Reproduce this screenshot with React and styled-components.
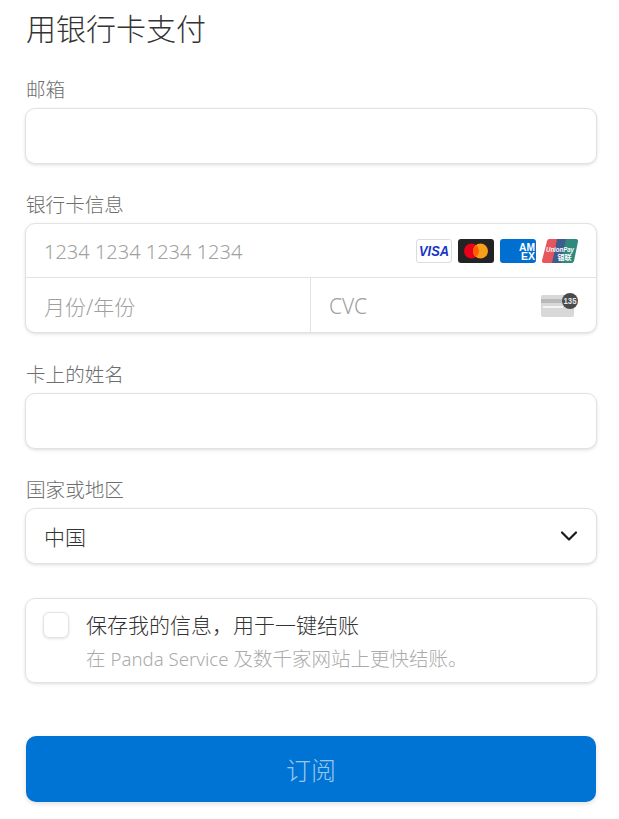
import React from 'react';
import styled, { createGlobalStyle } from 'styled-components';

const GlobalStyle = createGlobalStyle`
  html, body {
    margin: 0;
    padding: 0;
    background: #fff;
  }
  body {
    font-family: "Noto Sans", "Noto Sans CJK SC", sans-serif;
    font-weight: 300;
  }
`;

const fieldBorder = '1px solid #e2e2e2';
const fieldShadow = '0 1px 3px rgba(0, 0, 0, 0.1), 0 2px 4px rgba(0, 0, 0, 0.03)';

const Page = styled.form`
  width: 619px;
  height: 819px;
  box-sizing: border-box;
  padding: 8px 22px 0 25px;
  overflow: hidden;
`;

const Title = styled.h2`
  margin: 0 0 26px 1px;
  font-size: 30px;
  line-height: 42px;
  font-weight: 300;
  color: #333;
`;

const Field = styled.div`
  display: flex;
  flex-direction: column;
  margin-bottom: ${(p) => p.$gap || 27}px;
`;

const Label = styled.label`
  height: 28px;
  margin: 0 0 4px 1px;
  font-size: 19.6px;
  line-height: 28px;
  color: #6e6e6e;
`;

const Input = styled.input`
  height: 56px;
  box-sizing: border-box;
  border: ${fieldBorder};
  border-radius: 10px;
  padding: 0 18px;
  background: #fff;
  box-shadow: ${fieldShadow};
  font: inherit;
  font-size: 20px;
  outline: none;
`;

const CardBox = styled.div`
  height: 110px;
  box-sizing: border-box;
  display: grid;
  grid-template-rows: 53px 1px 54px;
  border: ${fieldBorder};
  border-radius: 10px;
  background: #fff;
  box-shadow: ${fieldShadow};
`;

const CardRow = styled.div`
  display: flex;
  align-items: center;
  justify-content: space-between;
  padding: 0 18px;
`;

const Divider = styled.div`
  background: #e2e2e2;
`;

const SplitRow = styled.div`
  display: grid;
  grid-template-columns: 284px 1fr;
`;

const SplitCell = styled.div`
  display: flex;
  align-items: center;
  justify-content: space-between;
  padding: 0 17px 0 18px;
  border-left: ${(p) => (p.$right ? fieldBorder : '0')};
`;

const Placeholder = styled.span`
  padding-top: 2px;
  font-size: ${(p) => p.$size || 20}px;
  color: #a0a0a0;
`;

const Brands = styled.div`
  display: flex;
  gap: 6px;
`;

const Select = styled.div`
  height: 56px;
  box-sizing: border-box;
  display: flex;
  align-items: center;
  justify-content: space-between;
  padding: 0 18px;
  border: ${fieldBorder};
  border-radius: 10px;
  background: #fff;
  box-shadow: ${fieldShadow};
  font-size: 21px;
  color: #333;
`;

const SaveBox = styled.div`
  height: 85px;
  box-sizing: border-box;
  display: flex;
  gap: 17px;
  padding: 13px 17px 0;
  border: ${fieldBorder};
  border-radius: 10px;
  box-shadow: ${fieldShadow};
`;

const Check = styled.span`
  flex: none;
  width: 26px;
  height: 26px;
  box-sizing: border-box;
  border: ${fieldBorder};
  border-radius: 6px;
  background: #fff;
  box-shadow: 0 1px 3px rgba(0, 0, 0, 0.1);
`;

const SaveText = styled.div`
  display: flex;
  flex-direction: column;
  margin-top: -2px;
`;

const SaveTitle = styled.span`
  font-size: 21px;
  line-height: 30px;
  color: #333;
`;

const SaveHint = styled.span`
  font-size: 19.5px;
  line-height: 38px;
  height: 38px;
  color: #aaa;
  white-space: nowrap;
`;

const BrandName = styled.span`
  font-size: 18.6px;
`;

const Submit = styled.button`
  display: block;
  width: 570px;
  height: 66px;
  margin: 53px 0 0 1px;
  padding: 0;
  border: 0;
  border-radius: 10px;
  background: #0074d4;
  box-shadow: 0 2px 5px rgba(0, 0, 0, 0.12);
  color: rgba(255, 255, 255, 0.6);
  font: inherit;
  font-size: 25px;
`;

const VisaIcon = () => (
  <svg width="36" height="24" viewBox="0 0 36 24">
    <rect x="0.5" y="0.5" width="35" height="23" rx="2.5" fill="#fff" stroke="#dcdce0" />
    <text x="18" y="17" textAnchor="middle" textLength="30" lengthAdjust="spacingAndGlyphs" fontFamily="Liberation Sans" fontSize="14.5" fontWeight="700" fontStyle="italic" fill="#1a35c4">VISA</text>
  </svg>
);

const MastercardIcon = () => (
  <svg width="36" height="24" viewBox="0 0 36 24">
    <rect width="36" height="24" rx="3" fill="#232323" />
    <circle cx="13.500" cy="12" r="7.500" fill="#eb001b" />
    <circle cx="22.500" cy="12" r="7.500" fill="#f79e1b" />
    <path d="M18 6a7.500 7.500 0 0 1 0 12a7.500 7.500 0 0 1 0-12z" fill="#ff5f00" />
  </svg>
);

const AmexIcon = () => (
  <svg width="36" height="24" viewBox="0 0 36 24">
    <rect width="36" height="24" rx="3" fill="#016fd0" />
    <text x="19" y="11.500" textLength="16" lengthAdjust="spacingAndGlyphs" fontFamily="Liberation Sans" fontSize="10.500" fontWeight="700" fill="#fff">AM</text>
    <text x="21" y="21" textLength="14" lengthAdjust="spacingAndGlyphs" fontFamily="Liberation Sans" fontSize="10.500" fontWeight="700" fill="#fff">EX</text>
  </svg>
);

const UnionPayIcon = () => (
  <svg width="36" height="24" viewBox="0 0 36 24">
    <path d="M7 0h11l-5 24H2a2 2 0 0 1-2-2.500L5 2a2.500 2.500 0 0 1 2-2z" fill="#e5565e" />
    <path d="M15 0h12l-5 24H10z" fill="#3e5c8e" />
    <path d="M24 0h10a2 2 0 0 1 2 2.500L32 22a2.500 2.500 0 0 1-2 2H19z" fill="#2f8a7d" />
    <text x="4" y="13" textLength="28" lengthAdjust="spacingAndGlyphs" fontFamily="Liberation Sans" fontSize="7" fontWeight="700" fontStyle="italic" fill="#fff">UnionPay</text>
    <text x="22.500" y="20.500" textAnchor="middle" fontFamily="Noto Sans CJK SC" fontSize="7" fontWeight="700" fill="#fff">银联</text>
  </svg>
);

const CvcIcon = () => (
  <svg width="38" height="26" viewBox="0 0 38 26">
    <rect x="0" y="3" width="33" height="22" rx="2" fill="#d8d8d8" />
    <rect x="0" y="7" width="33" height="4" fill="#b9b9b9" />
    <rect x="2" y="14" width="20" height="2" fill="#f4f4f4" />
    <circle cx="29" cy="9" r="8" fill="#4a4a4a" />
    <text x="29" y="12" textAnchor="middle" textLength="13" lengthAdjust="spacingAndGlyphs" fontFamily="Liberation Sans" fontSize="8.500" fontWeight="700" fill="#e6e6e6">135</text>
  </svg>
);

const Chevron = () => (
  <svg width="18" height="12" viewBox="0 0 18 12">
    <path d="M2 2.500l7 7 7-7" fill="none" stroke="#1a1a1a" strokeWidth="2.200" strokeLinecap="round" strokeLinejoin="round" />
  </svg>
);

const App = () => {
  return (
    <>
      <GlobalStyle />
      <Page>
        <Title>用银行卡支付</Title>
        <Field>
          <Label>邮箱</Label>
          <Input type="text" />
        </Field>
        <Field $gap={28}>
          <Label>银行卡信息</Label>
          <CardBox>
            <CardRow>
              <Placeholder>1234 1234 1234 1234</Placeholder>
              <Brands>
                <VisaIcon />
                <MastercardIcon />
                <AmexIcon />
                <UnionPayIcon />
              </Brands>
            </CardRow>
            <Divider />
            <SplitRow>
              <SplitCell>
                <Placeholder $size={21}>月份/年份</Placeholder>
              </SplitCell>
              <SplitCell $right>
                <Placeholder $size={21}>CVC</Placeholder>
                <CvcIcon />
              </SplitCell>
            </SplitRow>
          </CardBox>
        </Field>
        <Field>
          <Label>卡上的姓名</Label>
          <Input type="text" />
        </Field>
        <Field $gap={34}>
          <Label>国家或地区</Label>
          <Select>
            中国
            <Chevron />
          </Select>
        </Field>
        <SaveBox>
          <Check />
          <SaveText>
            <SaveTitle>保存我的信息，用于一键结账</SaveTitle>
            <SaveHint>在 <BrandName>Panda Service</BrandName> 及数千家网站上更快结账。</SaveHint>
          </SaveText>
        </SaveBox>
        <Submit type="button">订阅</Submit>
      </Page>
    </>
  );
};

export default App;
